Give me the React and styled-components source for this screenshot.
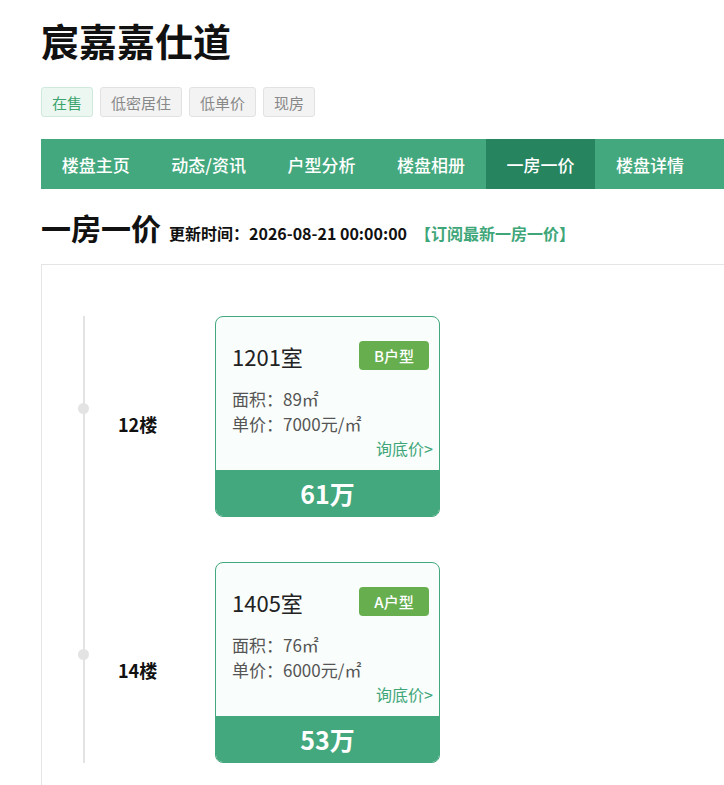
import React from 'react';
import styled, { createGlobalStyle } from 'styled-components';

const GlobalStyle = createGlobalStyle`
  body {
    margin: 0;
    font-family: "Noto Sans CJK SC", "Noto Sans", sans-serif;
    color: #222;
    background: #fff;
    overflow: hidden;
  }
`;

const Page = styled.div`
  padding-left: 41px;
  width: 800px;
`;

const Title = styled.h1`
  margin: 0;
  padding-top: 10px;
  font-size: 38px;
  line-height: 60px;
  font-weight: 700;
  color: #111;
`;

const Tags = styled.div`
  display: flex;
  gap: 7px;
  margin-top: 17px;
`;

const Tag = styled.span`
  display: inline-flex;
  align-items: center;
  height: 30px;
  box-sizing: border-box;
  padding: 0 10px;
  border-radius: 3px;
  font-size: 15px;
  border: 1px solid ${p => (p.$hot ? '#cfeadd' : '#e2e2e2')};
  background: ${p => (p.$hot ? '#ecf7f1' : '#f3f3f3')};
  color: ${p => (p.$hot ? '#3aa36e' : '#888')};
`;

const Nav = styled.nav`
  display: flex;
  height: 50px;
  margin-top: 22px;
  background: #43a87d;
`;

const NavItem = styled.a`
  display: flex;
  align-items: center;
  padding: 0 20.75px;
  font-size: 17px;
  font-weight: 500;
  color: #fff;
  white-space: nowrap;
  background: ${p => (p.$active ? '#26855f' : 'transparent')};
`;

const Heading = styled.div`
  display: flex;
  align-items: baseline;
  gap: 8px;
  margin-top: 16px;
  height: 59px;
`;

const HeadingTitle = styled.h2`
  margin: 0;
  font-size: 30px;
  font-weight: 700;
  color: #111;
`;

const UpdateTime = styled.span`
  font-size: 16px;
  font-weight: 700;
  color: #111;
`;

const Subscribe = styled.a`
  font-size: 16px;
  font-weight: 700;
  color: #3ea679;
`;

const Board = styled.div`
  border: 1px solid #e5e5e5;
  border-right: none;
  padding: 51px 0 30px 41px;
`;

const Timeline = styled.div`
  display: flex;
  flex-direction: column;
  gap: 45px;
  border-left: 2px solid #e3e3e3;
`;

const Row = styled.div`
  position: relative;
  display: flex;
  align-items: flex-start;
`;

const Dot = styled.span`
  position: absolute;
  left: -7px;
  top: 87px;
  width: 11px;
  height: 11px;
  border-radius: 50%;
  background: #e3e3e3;
`;

const Floor = styled.div`
  width: 130px;
  box-sizing: border-box;
  padding-left: 33px;
  margin-top: 95px;
  font-size: 18px;
  font-weight: 700;
  line-height: 26px;
  color: #111;
`;

const Card = styled.div`
  width: 225px;
  box-sizing: border-box;
  border: 1px solid #43a87d;
  border-radius: 8px;
  overflow: hidden;
  background: #f9fdfb;
`;

const CardBody = styled.div`
  padding: 24px 10px 10px 16px;
`;

const CardHead = styled.div`
  display: flex;
  justify-content: space-between;
  align-items: center;
  height: 29px;
  margin-bottom: 16px;
`;

const Room = styled.div`
  font-size: 22px;
  color: #222;
`;

const Layout = styled.span`
  display: flex;
  align-items: center;
  justify-content: center;
  width: 70px;
  height: 29px;
  border-radius: 4px;
  background: #67ae4f;
  color: #fff;
  font-size: 15px;
  font-weight: 500;
`;

const Info = styled.div`
  font-size: 17px;
  line-height: 25px;
  color: #555;
`;

const Ask = styled.a`
  display: block;
  text-align: right;
  margin-right: -4px;
  font-size: 16px;
  line-height: 24px;
  color: #3ea679;
`;

const Price = styled.div`
  display: flex;
  align-items: center;
  justify-content: center;
  height: 46px;
  background: #43a87d;
  color: #fff;
  font-size: 25px;
  font-weight: 700;
`;

const navItems = ['楼盘主页', '动态/资讯', '户型分析', '楼盘相册', '一房一价', '楼盘详情'];

const rooms = [
  { floor: '12楼', room: '1201室', type: 'B户型', area: '89㎡', unit: '7000元/㎡', total: '61万' },
  { floor: '14楼', room: '1405室', type: 'A户型', area: '76㎡', unit: '6000元/㎡', total: '53万' },
];

export default function App() {
  return (
    <Page>
      <GlobalStyle />
      <Title>宸嘉嘉仕道</Title>
      <Tags>
        <Tag $hot>在售</Tag>
        <Tag>低密居住</Tag>
        <Tag>低单价</Tag>
        <Tag>现房</Tag>
      </Tags>
      <Nav>
        {navItems.map(item => (
          <NavItem key={item} $active={item === '一房一价'}>{item}</NavItem>
        ))}
      </Nav>
      <Heading>
        <HeadingTitle>一房一价</HeadingTitle>
        <UpdateTime>更新时间：2026-08-21 00:00:00</UpdateTime>
        <Subscribe>【订阅最新一房一价】</Subscribe>
      </Heading>
      <Board>
        <Timeline>
          {rooms.map(r => (
            <Row key={r.room}>
              <Dot />
              <Floor>{r.floor}</Floor>
              <Card>
                <CardBody>
                  <CardHead>
                    <Room>{r.room}</Room>
                    <Layout>{r.type}</Layout>
                  </CardHead>
                  <Info>面积：{r.area}</Info>
                  <Info>单价：{r.unit}</Info>
                  <Ask>询底价&gt;</Ask>
                </CardBody>
                <Price>{r.total}</Price>
              </Card>
            </Row>
          ))}
        </Timeline>
      </Board>
    </Page>
  );
}
